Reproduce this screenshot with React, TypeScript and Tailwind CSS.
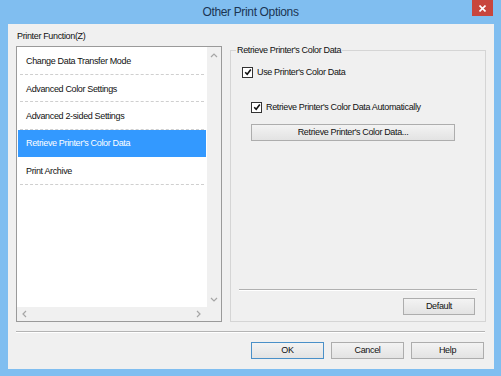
import React from 'react';

const items = [
  'Change Data Transfer Mode',
  'Advanced Color Settings',
  'Advanced 2-sided Settings',
  "Retrieve Printer's Color Data",
  'Print Archive',
];

function Chevron({ dir }: { dir: 'up' | 'down' | 'left' | 'right' }) {
  const d = {
    up: 'M1 5 L4 2 L7 5',
    down: 'M1 2 L4 5 L7 2',
    left: 'M5 1 L2 4 L5 7',
    right: 'M2 1 L5 4 L2 7',
  }[dir];
  return (
    <svg width="8" height="8" viewBox="0 0 8 8">
      <path d={d} fill="none" stroke="#a6a6a6" strokeWidth="1.2" />
    </svg>
  );
}

function Check({ label }: { label: string }) {
  return (
    <div className="flex items-center h-[12px] gap-[4px]">
      <span className="w-[11px] h-[11px] border border-[#333] bg-white flex items-center justify-center">
        <svg width="8" height="8" viewBox="0 0 8 8">
          <path d="M1.2 4.2 L3.2 6.2 L6.8 1.6" fill="none" stroke="#111" strokeWidth="1.6" />
        </svg>
      </span>
      <span className="leading-[12px]">{label}</span>
    </div>
  );
}

function Btn({ label, className = '', primary = false }: { label: string; className?: string; primary?: boolean }) {
  return (
    <button
      className={`h-[17px] flex items-center justify-center bg-gradient-to-b from-[#f3f3f3] to-[#e3e3e3] border ${
        primary ? 'border-[#4a90c8]' : 'border-[#adadad]'
      } text-[#111] leading-none ${className}`}
    >
      {label}
    </button>
  );
}

export default function App() {
  return (
    <div className="w-[501px] h-[376px] bg-[#80bef0] flex flex-col overflow-hidden font-['Liberation_Sans',Arial,sans-serif] text-[9px] tracking-[-0.35px] text-[#111]">
      {/* Title bar */}
      <div className="relative h-[24px] flex items-center justify-center">
        <span className="text-[12px] tracking-[-0.35px] text-[#1b3553]">Other Print Options</span>
        <div className="absolute right-[8px] top-0 w-[21px] h-[16px] bg-[#c8463d] flex items-center justify-center">
          <svg width="7" height="7" viewBox="0 0 7 7">
            <path d="M0.5 0.5 L6.5 6.5 M6.5 0.5 L0.5 6.5" stroke="#fff" strokeWidth="1.6" />
          </svg>
        </div>
      </div>

      {/* Client */}
      <div className="ml-[8px] mr-[7px] mb-[7px] flex-1 bg-[#f0f0f0] flex flex-col">
        <div className="pt-[6px] pl-[9px] h-[18px] leading-[12px]">Printer Function(Z)</div>

        <div className="mt-[3px] flex pl-[8px] gap-[8px] h-[277px]">
          {/* List box */}
          <div className="mt-[1px] w-[206px] h-[276px] border border-[#9a9a9a] bg-white flex flex-col">
            <div className="flex h-[261px]">
              <div className="w-[190px] px-[1px]">
                {items.map((it, i) =>
                  i === 3 ? (
                    <div key={it} className="h-[27.5px] bg-[#3399ff] text-white flex items-center pl-[8px] pt-[1px]">
                      {it}
                    </div>
                  ) : (
                    <div key={it} className="h-[27.5px] flex flex-col">
                      <div className="flex-1 flex items-center pl-[8px] pt-[3px]">{it}</div>
                      <div className="mx-[2px] border-b border-dashed border-[#cfcfcf]" />
                    </div>
                  )
                )}
              </div>
              <div className="w-[14px] bg-[#f0f0f0] flex flex-col items-center justify-between pt-[5px] pb-[3px]">
                <Chevron dir="up" />
                <Chevron dir="down" />
              </div>
            </div>
            <div className="h-[14px] flex">
              <div className="w-[190px] bg-[#f0f0f0] flex items-center justify-between px-[4px]">
                <Chevron dir="left" />
                <Chevron dir="right" />
              </div>
              <div className="w-[14px] bg-[#f0f0f0]" />
            </div>
          </div>

          {/* Group panel */}
          <div className="relative mt-[5px] w-[256px] h-[272px] border border-[#d5d5d5] flex flex-col">
            <span className="absolute left-[5px] -top-[6px] leading-[11px] bg-[#f0f0f0] px-[1px]">
              Retrieve Printer&apos;s Color Data
            </span>
            <div className="pt-[15px] pl-[11px]">
              <Check label="Use Printer's Color Data" />
            </div>
            <div className="mt-[23px] pl-[20px]">
              <Check label="Retrieve Printer's Color Data Automatically" />
            </div>
            <div className="mt-[11px] pl-[20px]">
              <Btn label="Retrieve Printer's Color Data..." className="w-[204px]" />
            </div>
            <div className="flex-1" />
            <div className="mx-[8px] h-[2px] border-t border-[#b0b0b0] border-b border-b-white" />
            <div className="mt-[7px] flex justify-end pr-[10px] pb-[6px]">
              <Btn label="Default" className="w-[72px]" />
            </div>
          </div>
        </div>

        <div className="mt-[9px] ml-[8px] mr-[9px] h-[2px] border-t border-[#b4b4b4] border-b border-b-white" />

        <div className="mt-[9px] flex justify-end gap-[7px] pr-[10px]">
          <Btn label="OK" className="w-[73px]" primary />
          <Btn label="Cancel" className="w-[73px]" />
          <Btn label="Help" className="w-[73px]" />
        </div>
      </div>
    </div>
  );
}
